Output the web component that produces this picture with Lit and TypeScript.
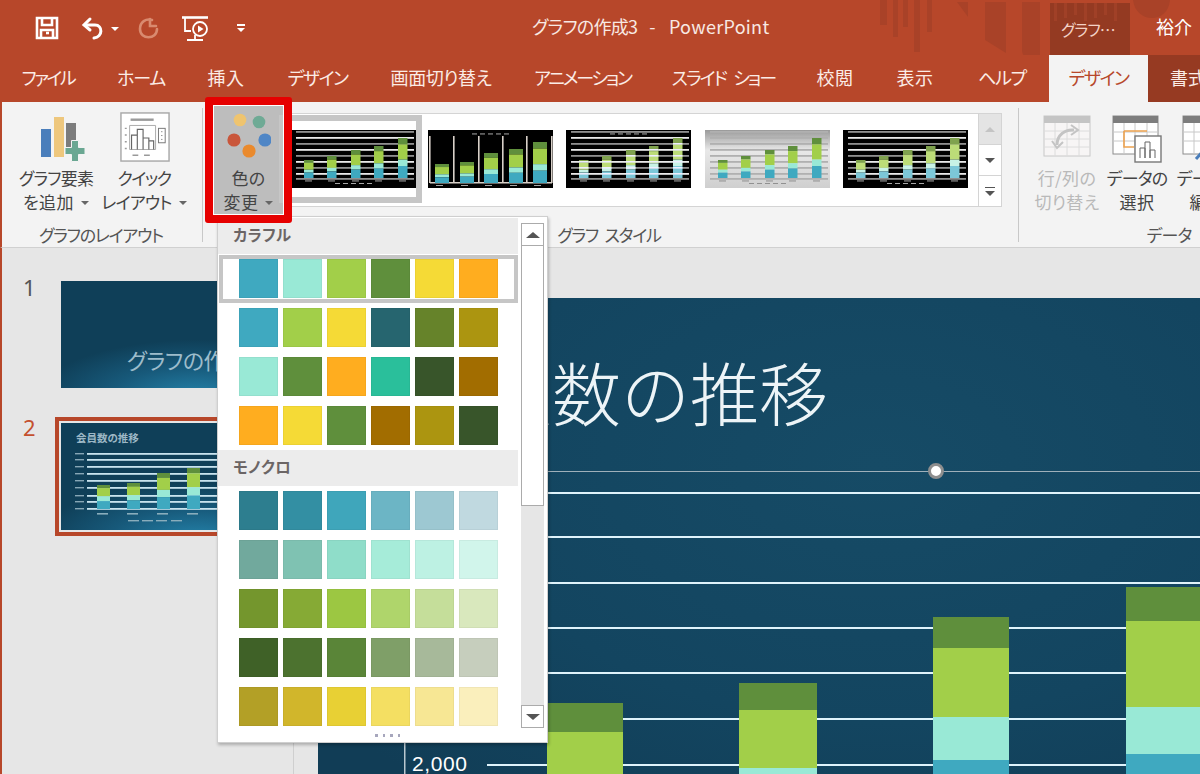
import { LitElement, html, css, svg } from "lit";
import { customElement } from "lit/decorators.js";

const C = { b: "#3fa9c0", m: "#99e9d6", l: "#a2cf49", d: "#5f8f3c", y: "#f5da36", o: "#ffad1f" };

const COLORFUL = [
  [C.b, C.m, C.l, C.d, C.y, C.o],
  [C.b, C.l, C.y, "#26656f", "#66832a", "#ac9510"],
  [C.m, C.d, C.o, "#2abf9b", "#38552a", "#a26d00"],
  [C.o, C.y, C.d, "#a26d00", "#ac9510", "#38552a"],
];
const MONO = [
  ["#2d7e8f", "#338fa3", "#3fa6bb", "#6cb5c5", "#9dc8d2", "#c0d9e0"],
  ["#71a99d", "#7fc2b2", "#8fddc9", "#a6ecd9", "#bdf1e3", "#d1f5eb"],
  ["#74962d", "#86aa35", "#9cc742", "#afd56b", "#c5de9a", "#d9e8bd"],
  ["#3f6127", "#4c722f", "#5a8538", "#7f9f68", "#a7b99a", "#c6cebd"],
  ["#b3a026", "#d1b62b", "#e8d034", "#f4df62", "#f7e794", "#faefbc"],
];

/* label and the tracking that brings it to the reference's measured width */
const TABS: [string, number][] = [
  ["ファイル", -2.4],
  ["ホーム", -1.2],
  ["挿入", 0.6],
  ["デザイン", -1.5],
  ["画面切り替え", -0.4],
  ["アニメーション", -2.2],
  ["スライド ショー", -1.9],
  ["校閲", 0.4],
  ["表示", 0.4],
  ["ヘルプ", -1.2],
];

function miniBar(x: number, w: number, top: number, bottom: number, pale: boolean) {
  const h = bottom - top;
  const cols = pale ? ["#7fa24e", "#bcdc78", "#c8f2e6", "#7cc7d8"] : [C.d, C.l, C.m, C.b];
  const parts = [0.16, 0.38, 0.16, 0.3];
  let y = top;
  return parts.map((p, i) => {
    const r = svg`<rect x=${x} y=${y} width=${w} height=${h * p} fill=${cols[i]} />`;
    y += h * p;
    return r;
  });
}

function miniChart(kind: number) {
  const xs = kind === 2 ? [7, 32, 56, 81, 105] : [13, 36, 60, 83, 107];
  const w = kind === 2 ? 14 : 9.5;
  const tops = kind === 2 ? [34, 32, 23, 19, 12] : [30, 26, 20, 16, 8];
  const bottom = kind === 2 ? 53 : 48;
  const light = kind === 4;
  const lines = [1, 7, 13, 19, 25, 31, 37, 43, 48];
  const ink = light ? "#888" : "#bbb";
  const legendY = kind === 2 || kind === 3 ? 3.5 : 53;
  return html`<svg class="mini" viewBox="0 0 125 58" width="125" height="58">
    <defs>
      <linearGradient id="mg" x1="0" y1="0" x2="0" y2="1">
        <stop offset="0" stop-color="#9a9a9a" /><stop offset=".35" stop-color="#e8e8e8" /><stop offset="1" stop-color="#cfcfcf" />
      </linearGradient>
    </defs>
    <rect width="125" height="58" fill=${light ? "url(#mg)" : "#000"} />
    ${kind === 2
      ? [2, 26, 51, 75, 99, 124].map((x) => svg`<rect x=${x - 1} y="6" width="1.6" height="47" fill="#d8d0c8" />`)
      : lines.map(
          (y, i) =>
            svg`<rect x="5" y=${y} width="118" height="1.8" fill=${light ? "#b0b0b0" : i % 2 ? "#e8e8e8" : "#8f8f8f"} />`
        )}
    ${kind === 2 ? svg`<rect x="2" y="52" width="122" height="1.5" fill="#d8d0c8" />` : ""}
    ${xs.map((x, i) => miniBar(x, w, tops[i], bottom, kind === 3 || kind === 5))}
    ${kind === 3
      ? xs.map((x, i) =>
          [0, 1, 2, 3, 4, 5, 6].map((n) => {
            const y = 7 + n * 6;
            return y > tops[i] ? svg`<rect x=${x} y=${y} width=${w} height="1.6" fill="#eef" />` : "";
          })
        )
      : ""}
    ${[44, 52, 60, 68, 76].map((x) => svg`<rect x=${x} y=${legendY} width="5" height="0.9" fill=${ink} />`)}
    ${xs.map((x) => svg`<rect x=${x + 1} y=${kind === 2 ? 55 : 50.5} width="7" height="0.9" fill=${ink} />`)}
  </svg>`;
}

const ICON_SAVE = html`<svg width="24" height="24" viewBox="0 0 24 24" fill="none" stroke="#fff" stroke-width="2.6">
  <path d="M2 2H22V22H2Z" /><path d="M7 2V9H17V2" /><path d="M6 22V14H18V22" /><path d="M11 17H14" />
</svg>`;
const ICON_UNDO = html`<svg width="24" height="24" viewBox="0 0 24 24" fill="none" stroke="#fff" stroke-width="3" stroke-linecap="round">
  <path d="M9 3L3 9L9 14" /><path d="M4 9H14C22 9 22 21 13 22" />
</svg>`;
const ICON_REDO = html`<svg width="24" height="24" viewBox="0 0 24 24" fill="none" stroke="#d98a6f" stroke-width="2.6" stroke-linecap="round">
  <path d="M14 3V10H20" /><path d="M16 4C10 2 4 6 4 13C4 24 21 24 21 13" />
</svg>`;
const ICON_SHOW = html`<svg width="28" height="26" viewBox="0 0 28 26" fill="none" stroke="#fff" stroke-width="1.8">
  <path d="M1 1.5H27" stroke-width="2.6" /><path d="M4 2V15H10" /><circle cx="19" cy="13" r="7" />
  <path d="M17 9.5L22.5 13L17 16.5Z" fill="#fff" stroke="none" /><path d="M14 19V23M6 24H22" />
</svg>`;

const ICON_ADD = html`<svg width="52" height="46" viewBox="0 0 52 46">
  <rect x="8" y="12" width="10" height="28" fill="#4a7ebb" />
  <rect x="21" y="0" width="10" height="40" fill="#eec77d" />
  <rect x="33" y="6" width="10" height="27" fill="#7c7c7c" />
  <path d="M38.5 23.5H45.5V30.5H52V37.5H45.5V44.5H38.5V37.5H32V30.5H38.5Z" fill="#6aa792" stroke="#f3f3f3" stroke-width="1" />
</svg>`;
const ICON_QUICK = html`<svg width="50" height="50" viewBox="0 0 52 52" fill="none">
  <rect x="1" y="1" width="50" height="50" fill="#fff" stroke="#a9a9a9" stroke-width="1.5" />
  <path d="M11 8H35" stroke="#9a9a9a" stroke-width="2.5" />
  <path d="M5 17h2M5 24h2M5 31h2M5 38h2" stroke="#9a9a9a" stroke-width="1.5" />
  <path d="M10 14H37V39H10Z" stroke="#aaa" />
  <path d="M12 39V24H18V39M18 39V18H24V39M24 39V27H30V39M30 39V30H35V39" stroke="#666" stroke-width="1.2" />
  <rect x="40" y="17" width="7" height="15" stroke="#777" />
  <path d="M43.5 20v1M43.5 24v1M43.5 28v1" stroke="#555" />
  <path d="M13 45h6M25 45h6" stroke="#999" stroke-width="1.6" />
</svg>`;
const ICON_COLORS = html`<svg width="44" height="46" viewBox="0 0 44 46">
  <circle cx="13" cy="7" r="6.3" fill="#efc46f" />
  <circle cx="32" cy="9" r="6.3" fill="#6faa95" />
  <circle cx="7" cy="27" r="6.6" fill="#c9563b" />
  <circle cx="38" cy="27" r="6.6" fill="#4f86c6" />
  <circle cx="22" cy="38" r="6.6" fill="#ea8a2d" />
</svg>`;
const ICON_SWITCH = html`<svg width="48" height="42" viewBox="0 0 48 42" fill="none">
  <rect x="1" y="1" width="46" height="40" fill="#f7f5f5" stroke="#c8c8c8" />
  <rect x="1" y="1" width="46" height="7" fill="#c4c4c4" />
  <path d="M1 16H47M1 24H47M1 32H47M12 8V41M24 8V41M36 8V41" stroke="#dcdcdc" />
  <path d="M14 30C14 20 22 14 31 15" stroke="#c4c4c4" stroke-width="3" />
  <path d="M28 10L35 15L28 20M9 26L14 33L20 27" stroke="#c4c4c4" stroke-width="2" />
</svg>`;
const ICON_SELECT = html`<svg width="50" height="48" viewBox="0 0 50 48" fill="none">
  <rect x="1" y="1" width="45" height="38" fill="#fff" stroke="#8c8c8c" />
  <rect x="1" y="1" width="45" height="7" fill="#7d7d7d" />
  <path d="M1 17H46M1 26H46M12 8V39M23 8V39M35 8V39" stroke="#c8c8c8" />
  <path d="M12 16H35M12 16V32H22" stroke="#eda24f" stroke-width="1.6" />
  <rect x="23" y="21" width="26" height="26" fill="#fff" stroke="#777" stroke-width="1.4" />
  <path d="M28 43V33H33V43M33 43V27H38V43M38 43V35H43V43" stroke="#666" />
</svg>`;
const ICON_EDIT = html`<svg width="50" height="48" viewBox="0 0 50 48" fill="none">
  <rect x="1" y="1" width="45" height="38" fill="#fff" stroke="#8c8c8c" />
  <rect x="1" y="1" width="45" height="7" fill="#7d7d7d" />
  <path d="M1 17H46M1 26H46M12 8V39M23 8V39M35 8V39" stroke="#c8c8c8" />
  <path d="M14 44L24 33" stroke="#4a7ebb" stroke-width="3" />
</svg>`;

const caret = html`<span class="caret"></span>`;

@customElement("app-root")
export class AppRoot extends LitElement {
  static styles = css`
    :host {
      display: block;
      position: relative;
      width: 1200px;
      height: 774px;
      overflow: hidden;
      background: #e6e6e6;
      font-family: "Noto Sans CJK JP", "Noto Sans", sans-serif;
      font-feature-settings: "palt";
      color: #444;
    }
    svg { display: block; }

    /* title bar */
    .titlebar {
      position: relative;
      height: 55px;
      background: #b7472a;
      display: flex;
      align-items: center;
      color: #f8e9e3;
    }
    .deco { position: absolute; left: 880px; top: 0; }
    .qat { display: flex; align-items: center; padding: 0 0 0 35px; position: relative; }
    .qat .undo { margin-left: 22px; }
    .qat .caret-w { border-top-color: #fff; margin: 2px 0 0 6px; }
    .qat .redo { margin-left: 17px; }
    .qat .show { margin-left: 21px; margin-top: 3px; }
    .qat .more { margin-left: 28px; width: 8px; }
    .more i { display: block; height: 2px; width: 8px; background: #fff; margin-bottom: 2px; }
    .more b { display: block; width: 0; height: 0; border: 4px solid transparent; border-top: 4px solid #fff; border-bottom: 0; }
    .doc-title {
      position: absolute;
      left: 532px;
      top: 14px;
      font-size: 18px;
      line-height: 25px;
      letter-spacing: -0.7px;
      white-space: pre;
      display: flex;
    }
    .doc-title .sep { margin: 0 14px 0 12px; }
    .doc-title .app { letter-spacing: 0.3px; }
    .tool-name {
      position: absolute;
      left: 1061px;
      top: 17px;
      font-size: 16px;
      line-height: 24px;
      letter-spacing: -1px;
      color: #f3d2c6;
    }
    .user {
      position: absolute;
      left: 1156px;
      top: 14px;
      font-size: 18px;
      line-height: 25px;
      color: #fff;
    }

    /* tabs */
    .tabs {
      display: grid;
      grid-template-columns: 96px 90px 80px 103px 144px 139px 143px 80px 80px 94px 99px 52px;
      height: 47px;
      background: #b7472a;
      color: #fbece6;
      font-size: 18px;
      word-spacing: 5px;
    }
    .tab {
      display: flex;
      align-items: center;
      justify-content: center;
      padding-bottom: 4px;
      white-space: pre;
    }
    .tab.active { background: #f3f3f3; color: #b7472a; letter-spacing: -1.5px; }
    .tab.format { background: #963a22; color: #fbece6; justify-content: flex-start; padding-left: 22px; overflow: hidden; }

    /* ribbon */
    .ribbon {
      display: flex;
      height: 146px;
      box-sizing: border-box;
      background: #f3f3f3;
      border-left: 2px solid #b7472a;
      border-bottom: 1px solid #d0d0d0;
    }
    .group { display: flex; flex-direction: column; flex: none; position: relative; }
    .group::after {
      content: "";
      position: absolute;
      right: 0;
      top: 6px;
      bottom: 5px;
      width: 1px;
      background: #c8c8c8;
    }
    .g1 { width: 201px; }
    .g2 { width: 816px; }
    .g3 { width: 300px; }
    .g3::after { display: none; }
    .g-body { height: 120px; display: flex; flex: none; }
    .g-label { height: 25px; line-height: 25px; text-align: center; font-size: 17px; letter-spacing: -1.2px; color: #555; white-space: pre; }
    .g1 .g-label { padding-right: 3px; }
    .g2 .g-label { word-spacing: 4px; padding-right: 4px; }
    .g3 .g-label { letter-spacing: -0.9px; }
    .g1 .g-body { padding-left: 9px; }
    .g3 .g-body { padding-left: 13px; }
    .btn { display: flex; flex-direction: column; align-items: center; flex: none; }
    .btn .ico { height: 64px; display: flex; justify-content: center; align-items: flex-start; }
    .btn .lbl { font-size: 17px; line-height: 24px; text-align: center; white-space: nowrap; letter-spacing: -0.8px; color: #444; }
    .btn .lbl span.l { display: flex; align-items: center; justify-content: center; height: 24px; }
    .btn .lbl span.kanji { letter-spacing: 0.4px; }
    .btn .lbl span.tight { letter-spacing: -1.5px; }
    .b-add { width: 90px; } .b-add .ico { padding-top: 15px; height: 49px; margin-left: 6px; }
    .b-quick { width: 86px; } .b-quick .ico { padding-top: 10px; height: 54px; margin-left: 1px; }
    .b-data { width: 70px; } .b-data .ico { padding-top: 13px; height: 51px; }
    .b-data.off .lbl { color: #b9b9b9; }
    .caret {
      display: inline-block;
      width: 0;
      height: 0;
      margin: 1px 0 0 7px;
      border-left: 4px solid transparent;
      border-right: 4px solid transparent;
      border-top: 4px solid #666;
    }
    .b-color {
      width: 69px;
      height: 111px;
      margin: 2px 0 0 11px;
      background: #bdbdbd;
    }
    .b-color .ico { padding-top: 9px; height: 51px; }
    .b-color .lbl { margin-top: 2px; }

    .gallery {
      position: relative;
      display: flex;
      align-items: center;
      width: 715px;
      height: 94px;
      margin: 11px 0 0 4px;
      box-sizing: border-box;
      background: #fff;
      border: 1px solid #d4d4d4;
    }
    .thumbs { display: flex; align-items: center; flex: 1; padding: 0 0 3px 140px; gap: 13.3px; height: 100%; box-sizing: border-box; }
    .sel {
      position: absolute;
      left: -9px;
      top: 1px;
      width: 143px;
      height: 88px;
      box-sizing: border-box;
      border: 6px solid #c6c6c6;
      background: #fff;
      display: flex;
      align-items: center;
      padding: 0 0 1px 6px;
    }
    .spin { width: 23px; flex: none; display: flex; flex-direction: column; height: 100%; border-left: 1px solid #d4d4d4; box-sizing: border-box; }
    .spin div { flex: 1; display: flex; flex-direction: column; align-items: center; justify-content: center; border-bottom: 1px solid #d4d4d4; }
    .spin div:last-child { border-bottom: 0; }
    .spin .up { background: #e4e4e4; }
    .tri-u { width: 0; height: 0; border: 5px solid transparent; border-top: 0; border-bottom: 5px solid #c4c4c4; }
    .tri-d { width: 0; height: 0; border: 5px solid transparent; border-bottom: 0; border-top: 5px solid #555; }
    .bar-l { width: 10px; height: 1px; background: #555; margin-bottom: 3px; }

    /* work area */
    .work { display: flex; height: 526px; border-left: 2px solid #b7472a; }
    .side {
      width: 292px;
      flex: none;
      box-sizing: border-box;
      border-right: 1px solid #cfcfcf;
      padding-top: 33px;
      display: flex;
      flex-direction: column;
      gap: 29px;
    }
    .row { display: flex; align-items: flex-start; }
    .num { flex: none; padding-left: 21px; box-sizing: border-box; font-size: 22px; line-height: 12px; color: #555; font-family: "Noto Sans", sans-serif; }
    .row1 .num { width: 59px; }
    .row2 .num { width: 53px; color: #c4502f; padding-top: 4px; }
    .t { width: 190px; height: 107px; flex: none; position: relative; overflow: hidden; background: radial-gradient(ellipse 85% 55% at 72% 110%, #2585ad 0%, #17597a 55%, #0f3f58 100%); }
    .t1 .t-name { position: absolute; left: 66px; top: 65px; font-size: 22px; line-height: 26px; color: #9dbccb; white-space: nowrap; letter-spacing: -.5px; }
    .frame { border: 4px solid #b7472a; padding: 2px; background: #e6e6e6; }
    .t-title { position: absolute; left: 15px; top: 8px; font-size: 10.5px; font-weight: 700; line-height: 14px; color: #9db8c6; white-space: nowrap; }
    .mini-slide { position: absolute; left: 0; top: 0; }

    .stage { flex: 1; position: relative; padding: 50px 0 0 24px; }
    .slide {
      position: relative;
      height: 476px;
      width: 900px;
      overflow: hidden;
      background: radial-gradient(ellipse 75% 90% at 62% 35%, #164b66 0%, #134560 60%, #113d56 100%);
    }
    .slide-title {
      position: absolute;
      left: 96px;
      top: 50px;
      font-size: 69px;
      line-height: 86px;
      font-weight: 300;
      color: #edf4f7;
      white-space: nowrap;
      font-feature-settings: normal;
    }
    .sel-line { position: absolute; left: 0; right: 0; top: 172.5px; height: 1px; background: #9fb0ba; }
    .handle {
      position: absolute;
      left: 610px;
      top: 165px;
      width: 16px;
      height: 16px;
      box-sizing: border-box;
      border-radius: 50%;
      background: #fff;
      border: 3px solid #8e8e8e;
    }
    .chart { position: absolute; left: 0; top: 0; }
    .tick { position: absolute; left: 94px; top: 453px; font: 21px/26px "Liberation Sans", sans-serif; letter-spacing: .6px; color: #fff; }

    /* annotation */
    .mark {
      position: absolute;
      left: 205px;
      top: 97px;
      width: 87px;
      height: 126px;
      box-sizing: border-box;
      border: 8px solid #e60000;
      border-radius: 3px;
      box-shadow: inset 0 0 0 1px #fff;
      pointer-events: none;
    }

    /* dropdown */
    .menu {
      position: absolute;
      left: 217px;
      top: 216px;
      width: 331px;
      height: 527px;
      box-sizing: border-box;
      background: #fff;
      border: 1px solid #cfcfcf;
      box-shadow: 1px 2px 3px rgba(0, 0, 0, 0.25);
      display: flex;
      padding-top: 1px;
    }
    .m-main { width: 303px; flex: none; position: relative; }
    .m-head {
      width: 300px;
      height: 36px;
      box-sizing: border-box;
      background: #ececec;
      font-size: 15.5px;
      font-weight: 700;
      line-height: 33px;
      padding-left: 15px;
      color: #6b6565;
      letter-spacing: 0.3px;
    }
    .pal {
      display: grid;
      grid-template-columns: repeat(6, 39px);
      grid-auto-rows: 39px;
      column-gap: 5px;
      row-gap: 10px;
      padding: 5px 0 5px 21px;
    }
    .sw { box-shadow: inset 0 0 0 1px rgba(0, 0, 0, 0.04); }
    .picked {
      position: absolute;
      left: 1px;
      top: 37px;
      width: 299px;
      height: 48px;
      box-sizing: border-box;
      border: 4px solid #c6c6c6;
    }
    .grip { position: absolute; left: 157px; top: 516px; display: flex; gap: 5px; }
    .grip i { width: 2.5px; height: 2.5px; background: #a7a7bd; display: block; }
    .sb { width: 23px; margin-top: 5px; height: 505px; display: flex; flex-direction: column; background: #e6e6e6; }
    .sb-btn { height: 23px; box-sizing: border-box; background: #fff; border: 1px solid #ababab; display: flex; align-items: center; justify-content: center; }
    .sb-btn .tri-u { border-width: 0 7px 6px; border-style: solid; border-color: transparent transparent #555; }
    .sb-btn .tri-d { border-width: 6px 7px 0; border-color: #555 transparent transparent; }
    .sb-thumb { height: 260px; box-sizing: border-box; background: #fff; border: 1px solid #ababab; border-top: 0; }
    .sb-track { flex: 1; }
  `;

  private deco() {
    return html`<svg class="deco" width="320" height="55" viewBox="0 0 320 55">
      <g fill="#a94228">
        <rect x="0" y="0" width="7" height="25" />
        <rect x="13" y="0" width="5" height="37" />
        <rect x="23" y="0" width="5" height="27" />
        <rect x="34" y="0" width="6" height="52" />
        <rect x="47" y="0" width="5" height="32" />
        <path d="M77 2H88L88 17Z" />
        <path d="M105 2H126V53L105 40Z" />
        <path d="M142 2H160V55C150 60 142 58 142 50Z" />
        <path d="M253 0H290C288 24 256 24 253 0Z" />
      </g>
      <rect x="170" y="3" width="80" height="52" fill="#943a22" />
      <g fill="#a04027">
        ${[0, 1, 2, 3, 4, 5, 6].map((i) => svg`<rect x=${174 + i * 10} y="3" width="3" height=${18 - (i % 3) * 3} />`)}
      </g>
    </svg>`;
  }

  private chart() {
    const lines = [195, 239, 285, 330, 375, 421, 467];
    const bars: [number, number, [number, string][]][] = [
      [229, 76, [[405, C.d], [434, C.l]]],
      [421, 78, [[385, C.d], [412, C.l], [470, C.m]]],
      [615, 76, [[319, C.d], [350, C.l], [419, C.m], [462, C.b]]],
      [808, 76, [[289, C.d], [323, C.l], [409, C.m], [456, C.b]]],
    ];
    return html`<svg class="chart" width="900" height="476" viewBox="0 0 900 476">
      <rect x="86" y="440" width="1.5" height="36" fill="#b9c8d0" />
      ${lines.map((y) => svg`<rect x="169" y=${y - 1} width="731" height="2" fill="#dff3fb" />`)}
      ${bars.map(([x, w, segs]) =>
        segs.map(([y, c], i) => svg`<rect x=${x} y=${y} width=${w} height=${(segs[i + 1] ? segs[i + 1][0] : 476) - y} fill=${c} />`)
      )}
    </svg>`;
  }

  private miniSlide() {
    const ys = [10, 16, 23, 30, 37, 44, 52, 58, 65];
    const bars: [number, number][] = [
      [36, 42],
      [66, 40],
      [96, 30],
      [126, 25],
    ];
    return html`<svg class="mini-slide" width="190" height="107" viewBox="0 0 190 107">
      <g transform="translate(0,20)">
        ${ys.map((y) => svg`<rect x="14" y=${y} width="9" height="1.4" fill="#87a7b6" /><rect x="26" y=${y} width="164" height="1.8" fill="#c8e3ee" />`)}
        ${bars.map(([x, t]) => {
          const h = 66 - t;
          return svg`<rect x=${x} y=${t} width="13" height=${h * 0.13} fill=${C.d} />
            <rect x=${x} y=${t + h * 0.13} width="13" height=${h * 0.34} fill=${C.l} />
            <rect x=${x} y=${t + h * 0.47} width="13" height=${h * 0.2} fill=${C.m} />
            <rect x=${x} y=${t + h * 0.67} width="13" height=${h * 0.33} fill=${C.b} />`;
        })}
        ${bars.map(([x]) => svg`<rect x=${x} y="70" width="11" height="1.6" fill="#89adbc" />`)}
        ${[67, 81, 95, 110].map((x) => svg`<rect x=${x} y="77" width="11" height="1.4" fill="#89adbc" />`)}
      </g>
    </svg>`;
  }

  render() {
    return html`
      <div class="titlebar">
        ${this.deco()}
        <div class="qat">
          ${ICON_SAVE}
          <span class="undo">${ICON_UNDO}</span>
          <span class="caret caret-w"></span>
          <span class="redo">${ICON_REDO}</span>
          <span class="show">${ICON_SHOW}</span>
          <span class="more"><i></i><b></b></span>
        </div>
        <span class="doc-title"><span>グラフの作成3</span><span class="sep">-</span><span class="app">PowerPoint</span></span>
        <span class="tool-name">グラフ…</span>
        <span class="user">裕介</span>
      </div>

      <div class="tabs">
        ${TABS.map(([t, ls]) => html`<div class="tab" style="letter-spacing:${ls}px">${t}</div>`)}
        <div class="tab active">デザイン</div>
        <div class="tab format">書式</div>
      </div>

      <div class="ribbon">
        <div class="group g1">
          <div class="g-body">
            <div class="btn b-add">
              <div class="ico">${ICON_ADD}</div>
              <div class="lbl"><span class="l">グラフ要素</span><span class="l kanji">を追加${caret}</span></div>
            </div>
            <div class="btn b-quick">
              <div class="ico">${ICON_QUICK}</div>
              <div class="lbl"><span class="l tight">クイック</span><span class="l">レイアウト${caret}</span></div>
            </div>
          </div>
          <div class="g-label">グラフのレイアウト</div>
        </div>

        <div class="group g2">
          <div class="g-body">
            <div class="btn b-color">
              <div class="ico">${ICON_COLORS}</div>
              <div class="lbl"><span class="l kanji">色の</span><span class="l kanji">変更${caret}</span></div>
            </div>
            <div class="gallery">
              <div class="sel">${miniChart(1)}</div>
              <div class="thumbs">
                ${miniChart(2)} ${miniChart(3)} ${miniChart(4)} ${miniChart(5)}
              </div>
              <div class="spin">
                <div class="up"><span class="tri-u"></span></div>
                <div><span class="tri-d"></span></div>
                <div><span class="bar-l"></span><span class="tri-d"></span></div>
              </div>
            </div>
          </div>
          <div class="g-label">グラフ スタイル</div>
        </div>

        <div class="group g3">
          <div class="g-body">
            <div class="btn b-data off">
              <div class="ico">${ICON_SWITCH}</div>
              <div class="lbl"><span class="l kanji">行/列の</span><span class="l kanji">切り替え</span></div>
            </div>
            <div class="btn b-data">
              <div class="ico">${ICON_SELECT}</div>
              <div class="lbl"><span class="l">データの</span><span class="l kanji">選択</span></div>
            </div>
            <div class="btn b-data">
              <div class="ico">${ICON_EDIT}</div>
              <div class="lbl"><span class="l">データの</span><span class="l kanji">編集</span></div>
            </div>
          </div>
          <div class="g-label">データ</div>
        </div>
      </div>

      <div class="work">
        <div class="side">
          <div class="row row1">
            <div class="num">1</div>
            <div class="t t1"><span class="t-name">グラフの作成</span></div>
          </div>
          <div class="row row2">
            <div class="num">2</div>
            <div class="frame">
              <div class="t">
                <span class="t-title">会員数の推移</span>
                ${this.miniSlide()}
              </div>
            </div>
          </div>
        </div>
        <div class="stage">
          <div class="slide">
            <span class="slide-title">会員数の推移</span>
            <div class="sel-line"></div>
            <div class="handle"></div>
            ${this.chart()}
            <span class="tick">2,000</span>
          </div>
        </div>
      </div>

      <div class="menu">
        <div class="m-main">
          <div class="m-head">カラフル</div>
          <div class="pal">
            ${COLORFUL.flat().map((c) => html`<div class="sw" style="background:${c}"></div>`)}
          </div>
          <div class="m-head">モノクロ</div>
          <div class="pal">
            ${MONO.flat().map((c) => html`<div class="sw" style="background:${c}"></div>`)}
          </div>
          <div class="picked"></div>
          <div class="grip"><i></i><i></i><i></i><i></i></div>
        </div>
        <div class="sb">
          <div class="sb-btn"><span class="tri-u"></span></div>
          <div class="sb-thumb"></div>
          <div class="sb-track"></div>
          <div class="sb-btn"><span class="tri-d"></span></div>
        </div>
      </div>

      <div class="mark"></div>
    `;
  }
}
